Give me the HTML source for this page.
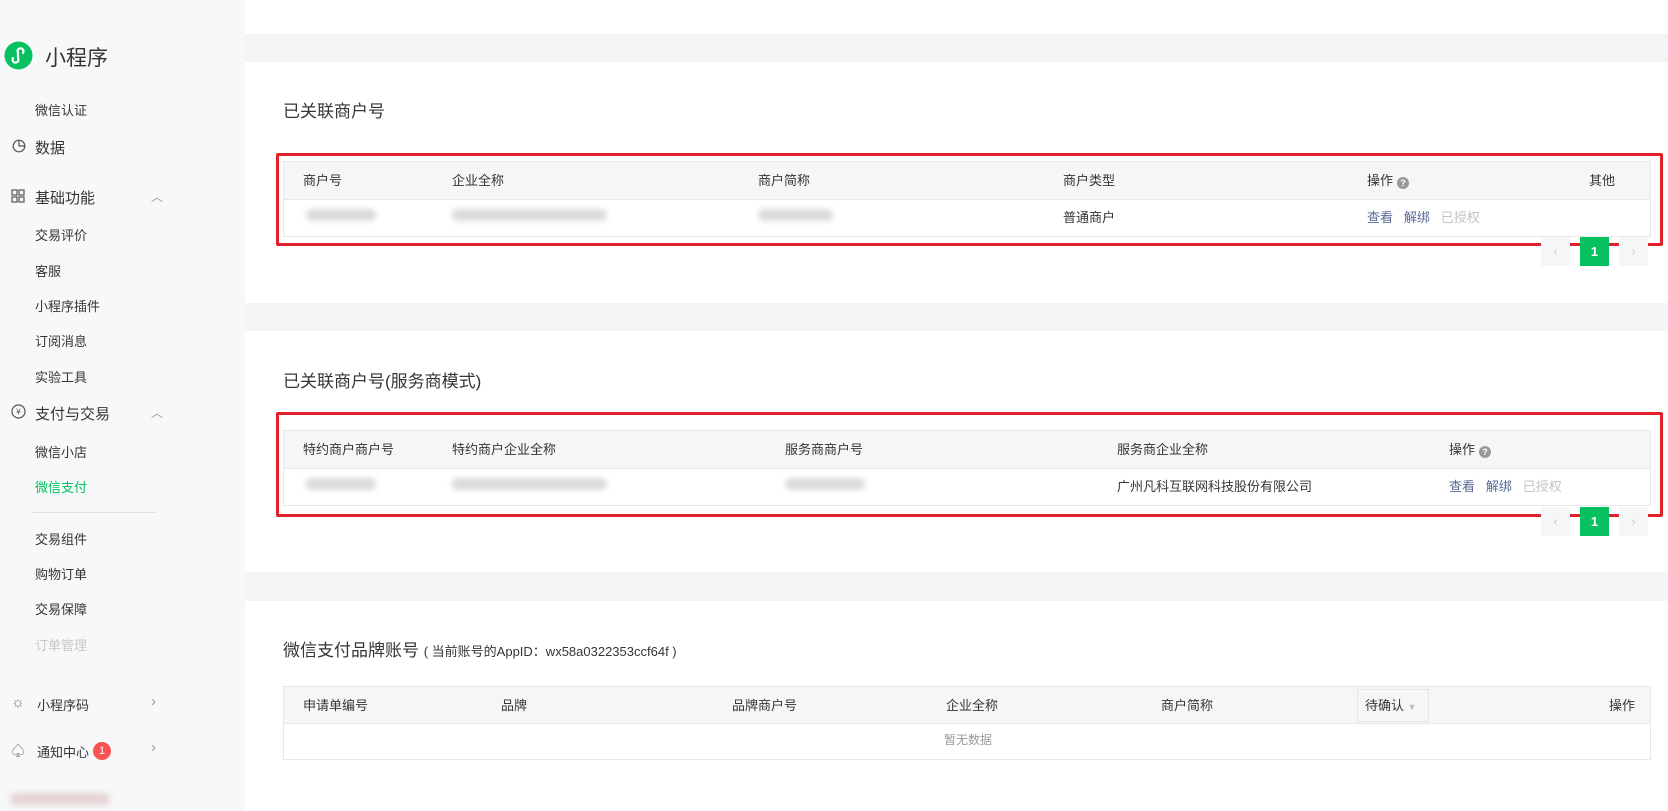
<!DOCTYPE html>
<html><head><meta charset="utf-8"><style>
*{margin:0;padding:0;box-sizing:border-box}
body{width:1668px;height:811px;overflow:hidden;background:#f3f4f6;font-family:"Liberation Sans","Noto Sans CJK SC",sans-serif;color:#353535;position:relative}
.a{position:absolute;white-space:nowrap}
#side{position:absolute;left:0;top:0;width:245px;height:811px;background:#f7f8fa}
.si{position:absolute;left:35px;font-size:13px;color:#353535}
.sm{position:absolute;left:35px;font-size:15px;color:#353535}
.card{position:absolute;left:245px;right:0;background:#fff}
.title{font-size:17px;color:#353535}
.red{position:absolute;border:3px solid #e0202a;border-radius:2px}
.tbl{position:absolute;left:283px;width:1368px;border:1px solid #e7e8eb}
.th{position:absolute;left:0;right:0;top:0;background:#f5f6f8;border-bottom:1px solid #e7e8eb}
.c{position:absolute;font-size:13px;color:#353535;white-space:nowrap}
.blur{position:absolute;height:12px;background:#d9dadc;border-radius:6px;filter:blur(3px)}
.lk{color:#576b95}
.dis{color:#c4c4c4}
.pg{position:absolute;width:29px;height:29px;background:#f5f6f7;color:#ccc;font-size:13px;text-align:center;line-height:29px}
.pg.g{background:#07c160;color:#fff;font-weight:bold}
.q{display:inline-block;width:12px;height:12px;border-radius:50%;background:#999;color:#fff;font-size:9px;text-align:center;line-height:12px;vertical-align:-1px;margin-left:4px;font-weight:bold}
.chev{position:absolute;left:151px;font-size:12px;color:#999}
</style></head><body>
<div id="side">
  <svg class="a" style="left:4px;top:41px" width="29" height="29" viewBox="0 0 29 29"><circle cx="14.5" cy="14.5" r="14" fill="#07c160"/><path d="M9 17a3 3 0 1 0 5 0v-5a3 3 0 1 1 5 0" fill="none" stroke="#fff" stroke-width="2.2" stroke-linecap="round"/></svg>
  <div class="a" style="left:45px;top:42px;font-size:21px;color:#353535">小程序</div>
  <div class="si" style="top:100px">微信认证</div>
  <svg class="a" style="left:12px;top:139px" width="14" height="14" viewBox="0 0 14 14"><circle cx="7" cy="7" r="5.8" fill="none" stroke="#555" stroke-width="1.2"/><path d="M7 1v6h6" fill="none" stroke="#555" stroke-width="1.2"/></svg>
  <div class="sm" style="top:137px">数据</div>
  <svg class="a" style="left:11px;top:189px" width="14" height="14" viewBox="0 0 14 14" fill="none" stroke="#555" stroke-width="1.2"><rect x="1" y="1" width="5" height="5"/><rect x="8" y="1" width="5" height="5"/><rect x="1" y="8" width="5" height="5"/><rect x="8" y="8" width="5" height="5"/></svg>
  <div class="sm" style="top:187px">基础功能</div>
  <div class="chev" style="top:188px">︿</div>
  <div class="si" style="top:225px">交易评价</div>
  <div class="si" style="top:261px">客服</div>
  <div class="si" style="top:296px">小程序插件</div>
  <div class="si" style="top:331px">订阅消息</div>
  <div class="si" style="top:367px">实验工具</div>
  <svg class="a" style="left:11px;top:404px" width="15" height="15" viewBox="0 0 15 15"><circle cx="7.5" cy="7.5" r="6.5" fill="none" stroke="#555" stroke-width="1.2"/><text x="7.5" y="10.5" font-size="8" text-anchor="middle" fill="#555">¥</text></svg>
  <div class="sm" style="top:403px">支付与交易</div>
  <div class="chev" style="top:404px">︿</div>
  <div class="si" style="top:442px">微信小店</div>
  <div class="si" style="top:477px;color:#07c160">微信支付</div>
  <div class="a" style="left:32px;top:512px;width:125px;height:1px;background:#e2e3e5"></div>
  <div class="si" style="top:529px">交易组件</div>
  <div class="si" style="top:564px">购物订单</div>
  <div class="si" style="top:599px">交易保障</div>
  <div class="si" style="top:635px;color:#c8c8c8">订单管理</div>
  <div class="a" style="left:11px;top:694px;font-size:15px;color:#777">☼</div>
  <div class="sm" style="left:37px;top:695px;font-size:13px">小程序码</div>
  <div class="chev" style="top:693px;font-size:15px">›</div>
  <div class="a" style="left:11px;top:741px;font-size:14px;color:#777">♤</div>
  <div class="sm" style="left:37px;top:742px;font-size:13px">通知中心</div>
  <div class="a" style="left:93px;top:742px;width:18px;height:18px;border-radius:9px;background:#fa5151;color:#fff;font-size:11px;text-align:center;line-height:18px">1</div>
  <div class="chev" style="top:739px;font-size:15px">›</div>
  <div class="blur" style="left:10px;top:793px;width:100px;background:#e5d3d3"></div>
</div>

<div class="card" style="top:0;height:34px"></div>

<div class="card" style="top:62px;height:241px"></div>
<div class="a title" style="left:283px;top:97px">已关联商户号</div>
<div class="tbl" style="top:161px;height:76px;background:#fff">
  <div class="th" style="height:38px"></div>
  <div class="c" style="left:19px;top:8px">商户号</div>
  <div class="c" style="left:168px;top:8px">企业全称</div>
  <div class="c" style="left:474px;top:8px">商户简称</div>
  <div class="c" style="left:779px;top:8px">商户类型</div>
  <div class="c" style="left:1083px;top:8px">操作<span class="q">?</span></div>
  <div class="c" style="left:1305px;top:8px">其他</div>
  <div class="blur" style="left:22px;top:47px;width:70px"></div>
  <div class="blur" style="left:168px;top:47px;width:155px"></div>
  <div class="blur" style="left:474px;top:47px;width:75px"></div>
  <div class="c" style="left:779px;top:45px">普通商户</div>
  <div class="c" style="left:1083px;top:45px"><span class="lk">查看</span>&nbsp;&nbsp;&nbsp;<span class="lk">解绑</span>&nbsp;&nbsp;&nbsp;<span class="dis">已授权</span></div>
</div>
<div class="red" style="left:276px;top:153px;width:1387px;height:93px"></div>
<div class="pg" style="left:1541px;top:237px">‹</div>
<div class="pg g" style="left:1580px;top:237px">1</div>
<div class="pg" style="left:1619px;top:237px">›</div>

<div class="card" style="top:331px;height:241px"></div>
<div class="a title" style="left:283px;top:367px">已关联商户号(服务商模式)</div>
<div class="tbl" style="top:430px;height:76px;background:#fff">
  <div class="th" style="height:38px"></div>
  <div class="c" style="left:19px;top:8px">特约商户商户号</div>
  <div class="c" style="left:168px;top:8px">特约商户企业全称</div>
  <div class="c" style="left:501px;top:8px">服务商商户号</div>
  <div class="c" style="left:833px;top:8px">服务商企业全称</div>
  <div class="c" style="left:1165px;top:8px">操作<span class="q">?</span></div>
  <div class="blur" style="left:22px;top:47px;width:70px"></div>
  <div class="blur" style="left:168px;top:47px;width:155px"></div>
  <div class="blur" style="left:501px;top:47px;width:80px"></div>
  <div class="c" style="left:833px;top:45px">广州凡科互联网科技股份有限公司</div>
  <div class="c" style="left:1165px;top:45px"><span class="lk">查看</span>&nbsp;&nbsp;&nbsp;<span class="lk">解绑</span>&nbsp;&nbsp;&nbsp;<span class="dis">已授权</span></div>
</div>
<div class="red" style="left:276px;top:412px;width:1387px;height:105px"></div>
<div class="pg" style="left:1541px;top:507px">‹</div>
<div class="pg g" style="left:1580px;top:507px">1</div>
<div class="pg" style="left:1619px;top:507px">›</div>

<div class="card" style="top:601px;height:210px"></div>
<div class="a title" style="left:283px;top:636px">微信支付品牌账号 <span style="font-size:13px">( 当前账号的AppID：wx58a0322353ccf64f )</span></div>
<div class="tbl" style="top:686px;height:74px;background:#fff">
  <div class="th" style="height:37px"></div>
  <div class="c" style="left:19px;top:8px">申请单编号</div>
  <div class="c" style="left:217px;top:8px">品牌</div>
  <div class="c" style="left:448px;top:8px">品牌商户号</div>
  <div class="c" style="left:662px;top:8px">企业全称</div>
  <div class="c" style="left:877px;top:8px">商户简称</div>
  <div class="a" style="left:1073px;top:2px;width:72px;height:33px;border:1px solid #e4e5e8"></div>
  <div class="c" style="left:1081px;top:8px">待确认 <span style="color:#bbb;font-size:9px">▼</span></div>
  <div class="c" style="left:1325px;top:8px">操作</div>
  <div class="c" style="left:660px;top:44px;color:#999;font-size:12px">暂无数据</div>
</div>
</body></html>
